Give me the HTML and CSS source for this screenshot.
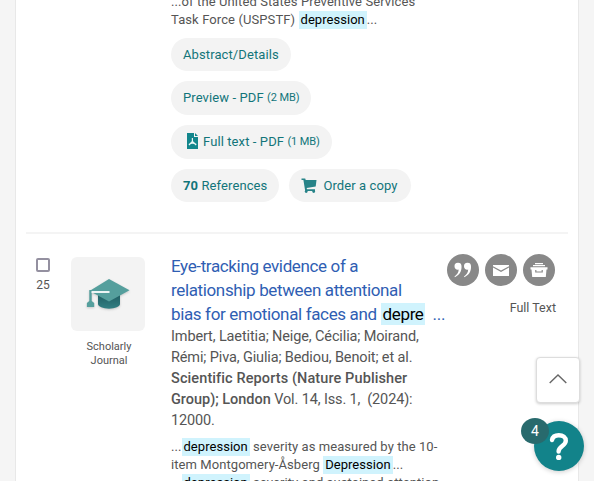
FILE: index.html
```html
<!DOCTYPE html>
<html lang="en">
<head>
<meta charset="utf-8">
<title>Search results</title>
<link rel="stylesheet" href="styles.css">
</head>
<body>
<main class="results">
  <article class="result previous">
    <div class="content">
      <p class="snippet">...of the United States Preventive Services<br>Task Force (USPSTF) <mark>depression</mark>...</p>
      <div class="links">
        <a class="pill">Abstract/Details</a>
        <a class="pill tall">Preview - PDF&nbsp;<small>(2 MB)</small></a>
        <a class="pill tall pdf"><svg width="11" height="16" viewBox="0 0 11 16"><path fill="#12868c" d="M0 0h7v4h4v12H0z"/><path fill="#12868c" d="M8 0l3 3H8z"/><path d="M5.400 5v3.500L2 12M5.400 8.500L9.200 12M2 11.500c2-1.500 5-1.500 7.200 0" fill="none" stroke="#e8f5f5" stroke-width="1.200"/></svg>Full text - PDF&nbsp;<small>(1 MB)</small></a>
        <div class="pair">
          <a class="pill"><b>70</b>&nbsp;References</a>
          <a class="pill order"><svg width="16" height="16" viewBox="0 0 16 16"><path fill="#278388" d="M.5.500h3.700l.5 1.500H15.500L14.700 8.500l-9 1.500.3 1.300H14v1.600H4.200L2.400 2H.5z"/><circle cx="5.200" cy="13.600" r="1.400" fill="#278388"/><circle cx="12.700" cy="13.600" r="1.400" fill="#278388"/></svg>Order a copy</a>
        </div>
      </div>
    </div>
  </article>
  <article class="result current">
    <div class="select"><span class="checkbox"></span><span class="number">25</span></div>
    <div class="source">
      <div class="thumb">
        <svg width="74" height="74" viewBox="0 0 74 74">
          <defs><linearGradient id="cap" x1="0" y1="0" x2="0" y2="1"><stop offset="0" stop-color="#1d565b"/><stop offset="1" stop-color="#327f83"/></linearGradient></defs>
          <g class="hat"><path fill="url(#cap)" d="M27 34h22v13c0 2.500-5 4.700-11 4.700S27 49.500 27 47z"/><path fill="#559f9d" d="M38 22l20.500 11.300L38 44.500 18.500 34z"/><path fill="#559f9d" d="M18.300 33h2.400v11l2.500 2v4h-7.300v-4l2.400-2z"/><path d="M20.500 35H38.500" stroke="#fff" stroke-width="1.800"/></g>
        </svg>
      </div>
      <p>Scholarly<br>Journal</p>
    </div>
    <div class="content details">
      <h2>Eye-tracking evidence of a<br>relationship between attentional<br>bias for emotional faces and <mark>depre</mark><span class="more">...</span></h2>
      <p class="citation">Imbert, Laetitia; Neige, Cécilia; Moirand,<br>Rémi; Piva, Giulia; Bediou, Benoit; et al.<br><b>Scientific Reports (Nature Publisher</b><br><b>Group); London</b> Vol. 14, Iss. 1,&nbsp; (2024):<br>12000.</p>
      <p class="snippet">...<mark>depression</mark> severity as measured by the 10-<br>item Montgomery-Åsberg <mark>Depression</mark>...<br>...<mark>depression</mark> severity and sustained attention</p>
    </div>
    <div class="tools">
      <div class="actions">
        <span class="action"><svg width="32" height="32" viewBox="0 0 32 32"><g fill="#fff"><path id="q" d="M7.500 12.300a3.500 3.500 0 0 1 7-.2c.4 5.400-2.300 9.200-6.600 11.200l-.4-.9c2.500-1.500 4-3.500 4.200-6.800-2 .8-4.200-.7-4.200-3.300z"/><use href="#q" x="9.500"/></g></svg></span>
        <span class="action"><svg width="32" height="32" viewBox="0 0 32 32"><path fill="#fff" d="M8 11h16v1.300l-8 4.300-8-4.300z"/><path fill="#fff" d="M8 13.600l8 4.400 8-4.400V22H8z"/></svg></span>
        <span class="action"><svg width="32" height="32" viewBox="0 0 32 32"><path fill="#fff" d="M12 9h8v1.200h-8zM10 11h12v1.300H10zM7.500 13.300h17v2.200h-1L22.800 23H9.200l-.7-7.500h-1z"/><path d="M12.800 16v2h6.400v-2" stroke="#888" fill="none" stroke-width="1.200"/></svg></span>
      </div>
      <p>Full Text</p>
    </div>
  </article>
</main>
<a class="top"><svg width="18" height="10" viewBox="0 0 18 10"><path d="M.7 9L9 1l8.300 8" fill="none" stroke="#666" stroke-width="1.400"/></svg></a>
<a class="help"><svg width="50" height="50" viewBox="0 0 50 50"><path d="M18 19c.7-3.300 3.300-4.700 6.800-4.700 4.200 0 7 2.200 7 5.500 0 5.200-7.200 5.400-7.200 10.700" fill="none" stroke="#fff" stroke-width="4.400" stroke-linecap="round"/><circle cx="24.700" cy="36.400" r="2.700" fill="#fff"/></svg><span class="badge">4</span></a>
</body>
</html>
```

FILE: styles.css
```css
* { box-sizing: border-box; }
html, body { height: 100%; overflow: hidden; }
body { margin: 0; background: #f5f5f5; color: #555; font-family: Roboto, "Liberation Sans", sans-serif; }
p, h2 { margin: 0; white-space: nowrap; }
svg { display: block; flex: none; }
.results { height: 481px; margin: 0 15px; background: #fff; border: solid #e8e8e8; border-width: 0 1px; padding: 0 10px; overflow: hidden; }
.content { width: 275px; }
.previous { height: 241px; padding-left: 145px; border-bottom: 2px solid #f4f4f4; margin-top: -7px; }
.snippet { font-size: 13px; line-height: 18px; letter-spacing: .1px; }
mark { background: #d0f3fd; color: #000; padding: 1px 2px; }
.snippet mark { padding: 1px 2px 2px; letter-spacing: .04px; }
.links { display: flex; flex-direction: column; align-items: flex-start; gap: 10px; margin-top: 9px; }
.pill { display: flex; align-items: center; height: 33px; padding: 0 12px; border-radius: 17px; background: #f3f3f3; color: #12757a; font-size: 13px; letter-spacing: .1px; white-space: nowrap; }
.tall { height: 34px; padding-bottom: 2px; }
small { font-size: 11px; letter-spacing: -.1px; }
.pdf { padding-left: 16px; }
.pdf svg { margin-right: 5px; }
.pair { display: flex; gap: 10px; }
.order { padding-right: 13.5px; }
.order svg { margin-right: 6px; }
.current { display: flex; padding-top: 23px; }
.select { width: 34px; display: flex; flex-direction: column; align-items: center; }
.checkbox { width: 14px; height: 14px; border: 2px solid #9490a0; border-radius: 2px; margin-top: 1px; }
.number { margin-top: 6px; font-size: 12px; line-height: 14px; }
.source { width: 74px; margin-left: 11px; text-align: center; font-size: 11px; line-height: 14px; }
.source p { padding-left: 2px; }
.thumb { width: 74px; height: 74px; background: #f3f3f3; border-radius: 6px; margin-bottom: 9px; }
.hat { filter: drop-shadow(0 1px 1px #8886); }
.details { margin-left: 26px; margin-top: -3px; }
h2 { font-size: 17px; line-height: 24px; font-weight: 400; letter-spacing: -.36px; color: #2f5eb3; }
h2 mark { padding-right: 1px; }
.more { margin-left: 8px; letter-spacing: -.2px; }
.citation { font-size: 14.5px; line-height: 21px; letter-spacing: -.13px; }
.citation b { font-weight: 500; letter-spacing: .1px; }
.citation b + br + b { letter-spacing: -.02px; }
.details .snippet { margin-top: 7px; letter-spacing: .07px; }
.tools { width: 109px; margin-left: 1px; margin-top: -3px; }
.actions { display: flex; gap: 6px; }
.action { width: 32px; height: 32px; border-radius: 50%; background: #888; }
.tools p { text-align: right; font-size: 12.5px; line-height: 16px; margin-top: 14px; }
.top { position: absolute; left: 536px; top: 357px; width: 44px; height: 46px; background: #fff; border: 1px solid #ddd; border-radius: 4px; box-shadow: 0 1px 3px #0003; display: flex; align-items: center; justify-content: center; padding-bottom: 2px; }
.help { position: absolute; left: 534px; top: 421px; width: 50px; height: 50px; border-radius: 50%; background: #12838a; box-shadow: 0 1px 5px #0003; }
.badge { position: absolute; left: -13px; top: -3px; width: 28px; height: 26px; border-radius: 50%; background: #286a6d; color: #fff; font-size: 14px; line-height: 26px; text-align: center; }
```
